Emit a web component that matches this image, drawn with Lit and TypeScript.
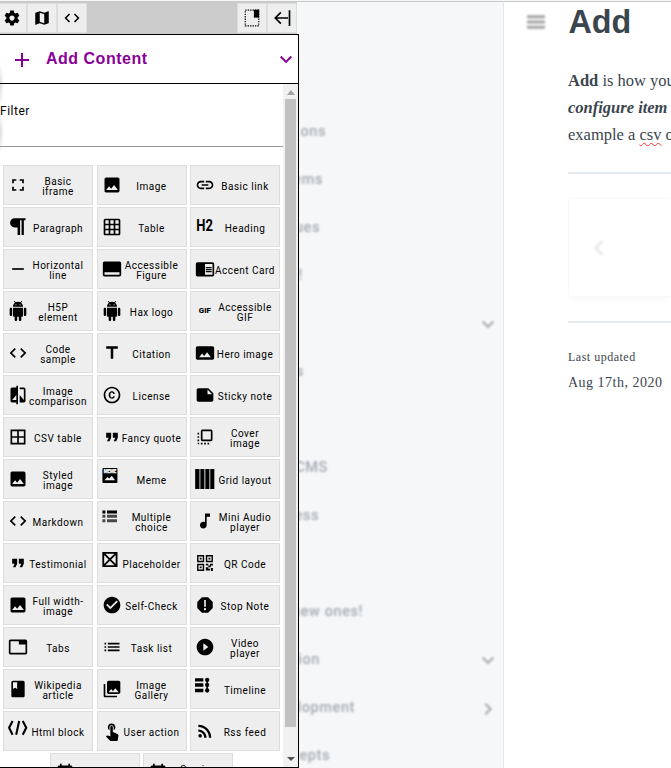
import { LitElement, html, css, svg } from "lit";
import { customElement } from "lit/decorators.js";

const p = (d: string) => svg`<path d=${d}></path>`;

const IMAGE = p("M21 19V5c0-1.1-.9-2-2-2H5c-1.1 0-2 .9-2 2v14c0 1.1.9 2 2 2h14c1.1 0 2-.9 2-2zM8.5 13.5l2.5 3.01L14.5 12l4.5 6H5l3.5-4.5z");
const CODE = p("M9.4 16.6L4.8 12l4.6-4.6L8 6l-6 6 6 6 1.4-1.4zm5.2 0l4.6-4.6-4.6-4.6L16 6l6 6-6 6-1.4-1.4z");
const QUOTE = p("M6 17h3l2-4V7H5v6h3zm8 0h3l2-4V7h-6v6h3z");
const ANDROID = p("M6 18c0 .55.45 1 1 1h1v3.5c0 .83.67 1.5 1.5 1.5s1.5-.67 1.5-1.5V19h2v3.5c0 .83.67 1.5 1.5 1.5s1.5-.67 1.5-1.5V19h1c.55 0 1-.45 1-1V8H6v10zM3.5 8C2.67 8 2 8.67 2 9.5v7c0 .83.67 1.5 1.5 1.5S5 17.33 5 16.5v-7C5 8.67 4.33 8 3.5 8zm17 0c-.83 0-1.5.67-1.5 1.5v7c0 .83.67 1.5 1.5 1.5s1.5-.67 1.5-1.5v-7c0-.83-.67-1.5-1.5-1.5zm-4.97-5.84l1.3-1.3c.2-.2.2-.51 0-.71-.2-.2-.51-.2-.71 0l-1.48 1.48C13.85 1.23 12.95 1 12 1c-.96 0-1.86.23-2.66.63L7.85.15c-.2-.2-.51-.2-.71 0-.2.2-.2.51 0 .71l1.31 1.31C6.97 3.26 6 5.01 6 7h12c0-1.99-.97-3.75-2.47-4.84zM10 5H9V4h1v1zm5 0h-1V4h1v1z");

const ICONS: Record<string, unknown> = {
  image: IMAGE,
  code: CODE,
  quote: QUOTE,
  android: ANDROID,
  settings: p("M19.43 12.98c.04-.32.07-.64.07-.98s-.03-.66-.07-.98l2.11-1.65c.19-.15.24-.42.12-.64l-2-3.46c-.12-.22-.39-.3-.61-.22l-2.49 1c-.52-.4-1.08-.73-1.69-.98l-.38-2.65C14.46 2.18 14.25 2 14 2h-4c-.25 0-.46.18-.49.42l-.38 2.65c-.61.25-1.17.59-1.69.98l-2.49-1c-.23-.09-.49 0-.61.22l-2 3.46c-.13.22-.07.49.12.64l2.11 1.65c-.04.32-.07.65-.07.98s.03.66.07.98l-2.11 1.65c-.19.15-.24.42-.12.64l2 3.46c.12.22.39.3.61.22l2.49-1c.52.4 1.08.73 1.69.98l.38 2.65c.03.24.24.42.49.42h4c.25 0 .46-.18.49-.42l.38-2.65c.61-.25 1.17-.59 1.69-.98l2.49 1c.23.09.49 0 .61-.22l2-3.46c.12-.22.07-.49-.12-.64l-2.11-1.65zM12 15.5c-1.93 0-3.5-1.57-3.5-3.5s1.57-3.5 3.5-3.5 3.5 1.57 3.5 3.5-1.57 3.5-3.5 3.5z"),
  map: p("M20.5 3l-.16.03L15 5.1 9 3 3.36 4.9c-.21.07-.36.25-.36.48V20.5c0 .28.22.5.5.5l.16-.03L9 18.9l6 2.1 5.64-1.9c.21-.07.36-.25.36-.48V3.5c0-.28-.22-.5-.5-.5zM15 19l-6-2.11V5l6 2.11V19z"),
  dock: svg`<rect x="3" y="1.500" width="18" height="21" fill="none" stroke="#000" stroke-width="1.500" stroke-dasharray="1.800 1.450"></rect><path d="M14.500 1h7v10.500h-7z"></path>`,
  collapse: svg`<path d="M22 1.500v21M20 12H2.500M10.500 4.500L3 12l7.500 7.500" fill="none" stroke="#000" stroke-width="2.200"></path>`,
  plus: p("M19 13h-6v6h-2v-6H5v-2h6V5h2v6h6v2z"),
  down: p("M7.41 7.84L12 12.42l4.59-4.58L18 9.25l-6 6-6-6z"),
  left: p("M15.41 16.59L10.83 12l4.58-4.59L14 6l-6 6 6 6z"),
  right: p("M8.59 16.59L13.17 12 8.59 7.41 10 6l6 6-6 6z"),
  iframe: p("M7 14H5v5h5v-2H7v-3zm-2-4h2V7h3V5H5v5zm12 7h-3v2h5v-5h-2v3zM14 5v2h3v3h2V5h-5z"),
  link: p("M3.9 12c0-1.71 1.39-3.1 3.1-3.1h4V7H7c-2.76 0-5 2.24-5 5s2.24 5 5 5h4v-1.9H7c-1.71 0-3.1-1.39-3.1-3.1zM8 13h8v-2H8v2zm9-6h-4v1.9h4c1.71 0 3.1 1.39 3.1 3.1s-1.39 3.1-3.1 3.1h-4V17h4c2.76 0 5-2.24 5-5s-2.24-5-5-5z"),
  paragraph: p("M8 1.500H21V4H19V21.500H16.300V4H14.500V21.500H11.500V12.500H8A5.500 5.500 0 0 1 8 1.500z"),
  table: p("M20 2H4c-1.1 0-2 .9-2 2v16c0 1.1.9 2 2 2h16c1.1 0 2-.9 2-2V4c0-1.1-.9-2-2-2zM8 20H4v-4h4v4zm0-6H4v-4h4v4zm0-6H4V4h4v4zm6 12h-4v-4h4v4zm0-6h-4v-4h4v4zm0-6h-4V4h4v4zm6 12h-4v-4h4v4zm0-6h-4v-4h4v4zm0-6h-4V4h4v4z"),
  heading: svg`<text x="1.500" y="16.500" font-size="19" font-weight="700" textLength="20" lengthAdjust="spacingAndGlyphs">H2</text>`,
  rule: p("M19 13H5v-2h14v2z"),
  figure: p("M21 3H3c-1.1 0-2 .9-2 2v14c0 1.1.9 2 2 2h18c1.1 0 2-.9 2-2V5c0-1.1-.9-2-2-2zm0 16H3v-3h18v3z"),
  card: p("M13 12h7v1.5h-7zm0-2.5h7V11h-7zm0 5h7V16h-7zM21 4H3c-1.1 0-2 .9-2 2v13c0 1.1.9 2 2 2h18c1.1 0 2-.9 2-2V6c0-1.1-.9-2-2-2zm0 15h-9V6h9v13z"),
  gif: svg`<text x="4.500" y="14.600" font-size="8" font-weight="800" textLength="14.500" lengthAdjust="spacingAndGlyphs">GIF</text>`,
  title: p("M5 4v3h5.500v12h3V7H19V4z"),
  hero: p("M23 18V6c0-1.1-.9-2-2-2H3c-1.1 0-2 .9-2 2v12c0 1.1.9 2 2 2h18c1.1 0 2-.9 2-2zM8.5 12.5l2.5 3.01L14.5 11l4.5 6H5l3.500-4.500z"),
  compare: p("M10 3H5c-1.1 0-2 .9-2 2v14c0 1.1.9 2 2 2h5v2h2V1h-2v2zm0 15H5l5-6v6zm9-15h-5v2h5v13l-5-6v9h5c1.1 0 2-.9 2-2V5c0-1.1-.9-2-2-2z"),
  license: p("M10.08 10.86c.05-.33.16-.62.3-.87s.34-.46.59-.62c.24-.15.54-.22.91-.23.23.01.44.05.63.13.2.09.38.21.52.36s.25.33.34.53.13.42.14.64h1.79c-.02-.47-.11-.9-.28-1.29s-.4-.73-.7-1.01-.66-.5-1.08-.66-.88-.23-1.39-.23c-.65 0-1.22.11-1.7.34s-.88.53-1.2.92-.56.84-.71 1.36S8 11.29 8 11.87v.27c0 .58.08 1.12.23 1.64s.39.97.71 1.35.72.69 1.2.91 1.05.34 1.7.34c.47 0 .91-.08 1.32-.23s.77-.36 1.08-.63.56-.58.74-.94.29-.74.3-1.15h-1.79c-.01.21-.06.4-.15.58s-.21.33-.36.46-.32.23-.52.3c-.19.07-.39.09-.6.1-.36-.01-.66-.08-.89-.23-.25-.16-.45-.37-.59-.62s-.25-.55-.3-.88-.08-.67-.08-1v-.27c0-.35.03-.68.08-1.01zM12 2C6.48 2 2 6.48 2 12s4.48 10 10 10 10-4.48 10-10S17.52 2 12 2zm0 18c-4.41 0-8-3.59-8-8s3.590-8 8-8 8 3.590 8 8-3.590 8-8 8z"),
  note: p("M22 10l-6-6H4c-1.1 0-2 .9-2 2v12.010c0 1.100.9 1.990 2 1.990l16-.01c1.1 0 2-.89 2-1.990v-8zm-7-4.500l5.500 5.500H15V5.500z"),
  csv: p("M3 3v18h18V3H3zm8 16H5v-6h6v6zm0-8H5V5h6v6zm8 8h-6v-6h6v6zm0-8h-6V5h6v6z"),
  cover: p("M3 13h2v-2H3v2zm0 4h2v-2H3v2zm2 4v-2H3c0 1.1.89 2 2 2zM3 9h2V7H3v2zm12 12h2v-2h-2v2zm4-18H9c-1.11 0-2 .9-2 2v10c0 1.1.89 2 2 2h10c1.1 0 2-.9 2-2V5c0-1.1-.9-2-2-2zm0 12H9V5h10v10zm-8 6h2v-2h-2v2zm-4 0h2v-2H7v2z"),
  meme: svg`<rect x=".5" y="-1.200" width="18" height="18" rx="1.200"></rect><text x="2" y="4.700" font-size="7.200" font-weight="900" fill="#fff" stroke="#fff" stroke-width=".3" textLength="15" lengthAdjust="spacingAndGlyphs">MEME</text><path fill="#eee" d="M3 13.500l3.500-4 2.200 2 3-3.500 4 5.500z"></path>`,
  grid: svg`<path d="M.2 0h5.200v24H.2zM6.400 0h4.900v24H6.400zM12.400 0h4.900v24h-4.900zM18.300 0h4.900v24h-4.900z"></path>`,
  choice: svg`<path d="M.5-.6h3.600v3.600H.5zM6-.6h12v3.600H6z"></path><path fill="#484848" d="M.5 4.600h3.600v3.600H.5zM6 4.600h12v3.600H6zM.5 9.800h3.600v3.600H.5zM6 9.800h12v3.600H6z"></path>`,
  music: p("M12 3v10.55c-.59-.34-1.27-.55-2-.55-2.21 0-4 1.79-4 4s1.79 4 4 4 4-1.79 4-4V7h4V3h-6z"),
  placeholder: svg`<path d="M1.500-.2h16v16h-16zM1.500-.2l16 16M17.500-.2l-16 16" fill="none" stroke="#000" stroke-width="2.200"></path>`,
  qr: svg`<path fill-rule="evenodd" d="M2.500 2.500h8.500v8.500H2.500zM4.200 4.200v5.100h5.100V4.200zM5.700 5.700h2.200v2.200H5.700zM13 2.500h8.500v8.500H13zM14.700 4.200v5.100h5.100V4.200zM16.200 5.700h2.200v2.200h-2.200zM2.500 13h8.500v8.500H2.500zM4.200 14.700v5.100h5.100v-5.100zM5.700 16.200h2.200v2.200H5.700zM13 13h3v2h-3zM18 13h3.500v2H19v2h-3v-2h2zM13 17h3v2h2v2h-5zM19 18h2.500v3.500H19z"></path>`,
  check: p("M12 2C6.48 2 2 6.48 2 12s4.48 10 10 10 10-4.48 10-10S17.52 2 12 2zm-2 15l-5-5 1.410-1.410L10 14.170l7.590-7.590L19 8l-9 9z"),
  stop: p("M15.730 2.700H8.270L2.700 8.270v7.460L8.270 21.300h7.460L21.300 15.730V8.270L15.730 2.700zM12 18.300c-.72 0-1.300-.58-1.300-1.300 0-.72.58-1.300 1.300-1.300.72 0 1.300.58 1.300 1.300 0 .72-.58 1.300-1.300 1.300zm1-4.300h-2V6h2v8z"),
  play: p("M12 2C6.48 2 2 6.48 2 12s4.48 10 10 10 10-4.48 10-10S17.52 2 12 2zm-2 14.500v-9l6 4.500-6 4.500z"),
  tabs: p("M21 3H3c-1.1 0-2 .9-2 2v14c0 1.1.9 2 2 2h18c1.1 0 2-.9 2-2V5c0-1.1-.9-2-2-2zm0 16H3V5h10v4h8v10z"),
  list: p("M3 13h2v-2H3v2zm0 4h2v-2H3v2zm0-8h2V7H3v2zm4 4h14v-2H7v2zm0 4h14v-2H7v2zM7 7v2h14V7H7z"),
  book: p("M18 2H6c-1.1 0-2 .9-2 2v16c0 1.1.9 2 2 2h12c1.1 0 2-.9 2-2V4c0-1.1-.9-2-2-2zM6 4h5v8l-2.500-1.500L6 12V4z"),
  gallery: p("M22 16V4c0-1.1-.9-2-2-2H8c-1.1 0-2 .9-2 2v12c0 1.1.9 2 2 2h12c1.1 0 2-.9 2-2zm-11-4l2.030 2.710L16 11l4 5H8l3-4zM2 6v14c0 1.1.9 2 2 2h14v-2H4V6H2z"),
  timeline: svg`<path d="M0-1h10v4H0zM0 5.200h10v4H0zM0 11.800h10v4H0zM13.700 0h1.800v15h-1.800z"></path><circle cx="14.600" cy="1" r="2.600"></circle><circle cx="14.600" cy="7.200" r="2.600"></circle><circle cx="14.600" cy="13.800" r="2.600"></circle>`,
  html: svg`<path d="M5.500 0L1.300 8.200l4.200 8.200M17.700 0l4.200 8.200-4.200 8.200M13.400 0L9.800 16.400" fill="none" stroke="#000" stroke-width="2.500"></path>`,
  touch: p("M9 11.24V7.5C9 6.12 10.12 5 11.5 5S14 6.12 14 7.5v3.74c1.21-.81 2-2.18 2-3.74C16 5.01 13.99 3 11.5 3S7 5.01 7 7.5c0 1.56.79 2.93 2 3.74zm9.84 4.63l-4.54-2.26c-.17-.07-.35-.11-.54-.11H13v-6c0-.83-.67-1.5-1.5-1.5S10 6.67 10 7.5v10.74l-3.43-.72c-.08-.01-.15-.03-.24-.03-.31 0-.59.13-.79.33l-.79.8 4.94 4.94c.27.27.65.44 1.06.44h6.79c.75 0 1.33-.55 1.44-1.28l.75-5.27c.01-.07.02-.14.02-.2 0-.62-.38-1.16-.91-1.38z"),
  rss: svg`<circle cx="6.180" cy="17.820" r="2.180"></circle><path d="M4 4.440v2.830c7.030 0 12.730 5.700 12.730 12.730h2.830c0-8.590-6.970-15.560-15.560-15.560zm0 5.660v2.830c3.900 0 7.070 3.170 7.070 7.070h2.830c0-5.470-4.430-9.900-9.900-9.900z"></path>`,
  event: p("M17 12h-5v5h5v-5zM16 1v2H8V1H6v2H5c-1.110 0-1.990.9-1.990 2L3 19c0 1.100.89 2 2 2h14c1.100 0 2-.9 2-2V5c0-1.100-.9-2-2-2h-1V1h-2zm3 18H5V8h14v11z"),
  menu: svg`<path d="M3 5.200h18v3H3zM3 10.500h18v3H3zM3 15.800h18v3H3z"></path>`,
};

const icon = (name: string, cls: string) =>
  html`<svg class="icon ${cls}" viewBox="0 0 24 24" aria-hidden="true">${ICONS[name]}</svg>`;

/* icon name, then one entry per label line */
const BLOCKS: string[][] = [
  ["iframe", "Basic", "iframe"], ["image", "Image"], ["link", "Basic link"],
  ["paragraph", "Paragraph"], ["table", "Table"], ["heading", "Heading"],
  ["rule", "Horizontal", "line"], ["figure", "Accessible", "Figure"], ["card", "Accent Card"],
  ["android", "H5P", "element"], ["android", "Hax logo"], ["gif", "Accessible", "GIF"],
  ["code", "Code", "sample"], ["title", "Citation"], ["hero", "Hero image"],
  ["compare", "Image", "comparison"], ["license", "License"], ["note", "Sticky note"],
  ["csv", "CSV table"], ["quote", "Fancy quote"], ["cover", "Cover", "image"],
  ["image", "Styled", "image"], ["meme", "Meme"], ["grid", "Grid layout"],
  ["code", "Markdown"], ["choice", "Multiple", "choice"], ["music", "Mini Audio", "player"],
  ["quote", "Testimonial"], ["placeholder", "Placeholder"], ["qr", "QR Code"],
  ["image", "Full width-", "image"], ["check", "Self-Check"], ["stop", "Stop Note"],
  ["tabs", "Tabs"], ["list", "Task list"], ["play", "Video", "player"],
  ["book", "Wikipedia", "article"], ["gallery", "Image", "Gallery"], ["timeline", "Timeline"],
  ["html", "Html block"], ["touch", "User action"], ["rss", "Rss feed"],
  ["event"], ["event", "Service", ""],
];

/* menu label, optional disclosure arrow, x of the label's right edge */
const MENU: string[][] = [
  ["ons", "", "326"], ["ems", "", "323"], ["ues", "", "320"], ["!", "", "303"], ["", "down", "0"], ["s", "", "304"],
  ["", "", "0"], ["CMS", "", "328"], ["ess", "", "319"], ["", "", "0"], ["new ones!", "", "363"],
  ["ion", "down", "320"], ["lopment", "right", "355"], ["epts", "", "330"],
];

@customElement("app-root")
export class AppRoot extends LitElement {
  static styles = css`
    :host { display: block; width: 671px; height: 768px; position: relative; overflow: hidden; background: #fff; color: #3b454e; }
    * { box-sizing: border-box; }
    .icon { display: block; flex: none; overflow: visible; fill: currentColor; font-family: Roboto, sans-serif; }
    .page { display: grid; grid-template-columns: 504px 1fr; height: 768px; border-top: 1px solid #f7f7f7; }
    .page > * { border-top: 1px solid #c6c9c8; }
    .side { background: #f5f7f9; border-right: 1px solid #e0e7f1; padding-top: 106px; overflow: hidden; }
    .entry { height: 48px; display: flex; align-items: center; justify-content: space-between; padding-right: 3px; font: 500 14.500px/20px Roboto, sans-serif; letter-spacing: .6px; color: #a5abaf; filter: blur(1px); }
    .entry span { text-align: right; white-space: nowrap; }
    .i18 { width: 18px; height: 18px; }
    .i20 { width: 20px; height: 20px; }
    .i24 { width: 24px; height: 24px; }
    .i32 { width: 32px; height: 32px; }
    .entry .icon { color: #a4a8ab; margin-top: 1px; }
    .main { display: grid; grid-template-columns: 64px 1fr; white-space: nowrap; overflow: hidden; }
    .burger { padding: 8px 0 0 20px; color: #a4a4a4; filter: blur(.8px); }
    .article { overflow: hidden; font-family: "Liberation Serif", serif; }
    h1 { margin: 0; height: 65px; font: 700 32.300px/40px "Liberation Sans", sans-serif; padding-left: .5px; }
    .copy { margin: 0; font-size: 16.500px; line-height: 27px; height: 105px; }
    .wavy { text-decoration: underline wavy #f33 .8px; text-underline-offset: 1.500px; }
    .line { height: 2px; background: #e6eaf1; }
    .nav { height: 99px; margin: 24px 0; border: 1px solid #f9f9f9; border-right: 0; border-radius: 3px 0 0 3px; box-shadow: 0 3px 8px #00000006; padding: 33px 0 0 14px; color: #e6e6e6; }
    .nav .icon { filter: blur(1px); }
    .when { margin-top: 22px; font-size: 12px; line-height: 25px; letter-spacing: .5px; }
    .date { font-size: 14px; line-height: 25px; letter-spacing: .5px; }

    .tray { position: absolute; top: 2px; left: 0; width: 299px; height: 766px; display: flex; flex-direction: column; color: #000; }
    .bar { height: 32px; width: 297px; background: #ccc; padding: 1px 0; display: flex; justify-content: space-between; }
    .group { display: flex; }
    .tool { width: 30px; height: 30px; background: #eee; border: 1px solid #ddd; display: grid; place-items: center; }
    .start .tool:first-child { width: 27px; padding-right: 2px; border-left: 0; }
    .panel { flex: 1; min-height: 0; border: 1px solid #000; border-left: 0; display: flex; flex-direction: column;
      background: radial-gradient(ellipse 4px 22px at 0 50px, #0002, transparent), radial-gradient(ellipse 4px 22px at 0 98px, #0002, transparent), #fff; }
    .head { height: 49px; flex: none; border-bottom: 1px solid #000; color: #8a0099; display: flex; align-items: center; padding: 0 0 0 10px; font: 700 16px/20px "Liberation Sans", sans-serif; letter-spacing: .5px; }
    .head .title { flex: 1; padding-left: 12px; }
    .head .icon { margin-top: 2px; }
    .body { flex: 1; min-height: 0; display: flex; }
    .list { width: 283px; overflow: hidden; }
    .filter { height: 63px; border-bottom: 1px solid #999; padding-top: 17px; font: 400 12px/20px Roboto, sans-serif; letter-spacing: .5px; }
    .blocks { display: flex; flex-wrap: wrap; justify-content: center; gap: 2px 3.500px; padding-top: 18px; }
    .block { width: 90px; height: 40px; background: #eee; border: 1px solid #ddd; display: flex; align-items: center; padding-left: 4px; }
    .label { width: 60px; padding-top: 3px; display: flex; flex-direction: column; align-items: center; white-space: nowrap; font: 400 10px/10px Roboto, sans-serif; letter-spacing: .5px; }
    .label span { min-height: 10px; }
    .scroll { width: 15px; background: #f1f1f1; display: flex; flex-direction: column; align-items: center; padding-top: 6px; }
    .thumb { width: 11px; height: 628px; background: #c1c1c1; margin: 4px 0 30px; }
    .up { border: 4px solid transparent; border-top: 0; border-bottom: 5px solid #a3a3a3; }
    .dn { border: 4px solid transparent; border-bottom: 0; border-top: 4px solid #505050; }
  `;

  render() {
    return html`
      <div class="page">
        <nav class="side">
          ${MENU.map(([text, arrow, end]) => html`
            <div class="entry"><span style="width:${end}px">${text}</span>${arrow ? icon(arrow, "i24") : ""}</div>`)}
        </nav>
        <main class="main">
          <div class="burger">${icon("menu", "i24")}</div>
          <article class="article">
            <h1>Add</h1>
            <p class="copy"><b>Add</b> is how you<br><b><i>configure item</i></b><br>example a <span class="wavy">csv</span> or</p>
            <div class="line"></div>
            <div class="nav">${icon("left", "i32")}</div>
            <div class="line"></div>
            <div class="when">Last updated</div>
            <div class="date">Aug 17th, 2020</div>
          </article>
        </main>
      </div>
      <aside class="tray">
        <div class="bar">
          <div class="group start">
            <div class="tool">${icon("settings", "i18")}</div>
            <div class="tool">${icon("map", "i18")}</div>
            <div class="tool">${icon("code", "i18")}</div>
          </div>
          <div class="group">
            <div class="tool">${icon("dock", "i18")}</div>
            <div class="tool">${icon("collapse", "i18")}</div>
          </div>
        </div>
        <section class="panel">
          <div class="head">${icon("plus", "i24")}<span class="title">Add Content</span>${icon("down", "i24")}</div>
          <div class="body">
            <div class="list">
              <div class="filter">Filter</div>
              <div class="blocks">
                ${BLOCKS.map(([name, ...lines]) => html`
                  <div class="block">${icon(name, "i20")}<div class="label">${lines.map((l) => html`<span>${l}</span>`)}</div></div>`)}
              </div>
            </div>
            <div class="scroll"><div class="up"></div><div class="thumb"></div><div class="dn"></div></div>
          </div>
        </section>
      </aside>
    `;
  }
}
